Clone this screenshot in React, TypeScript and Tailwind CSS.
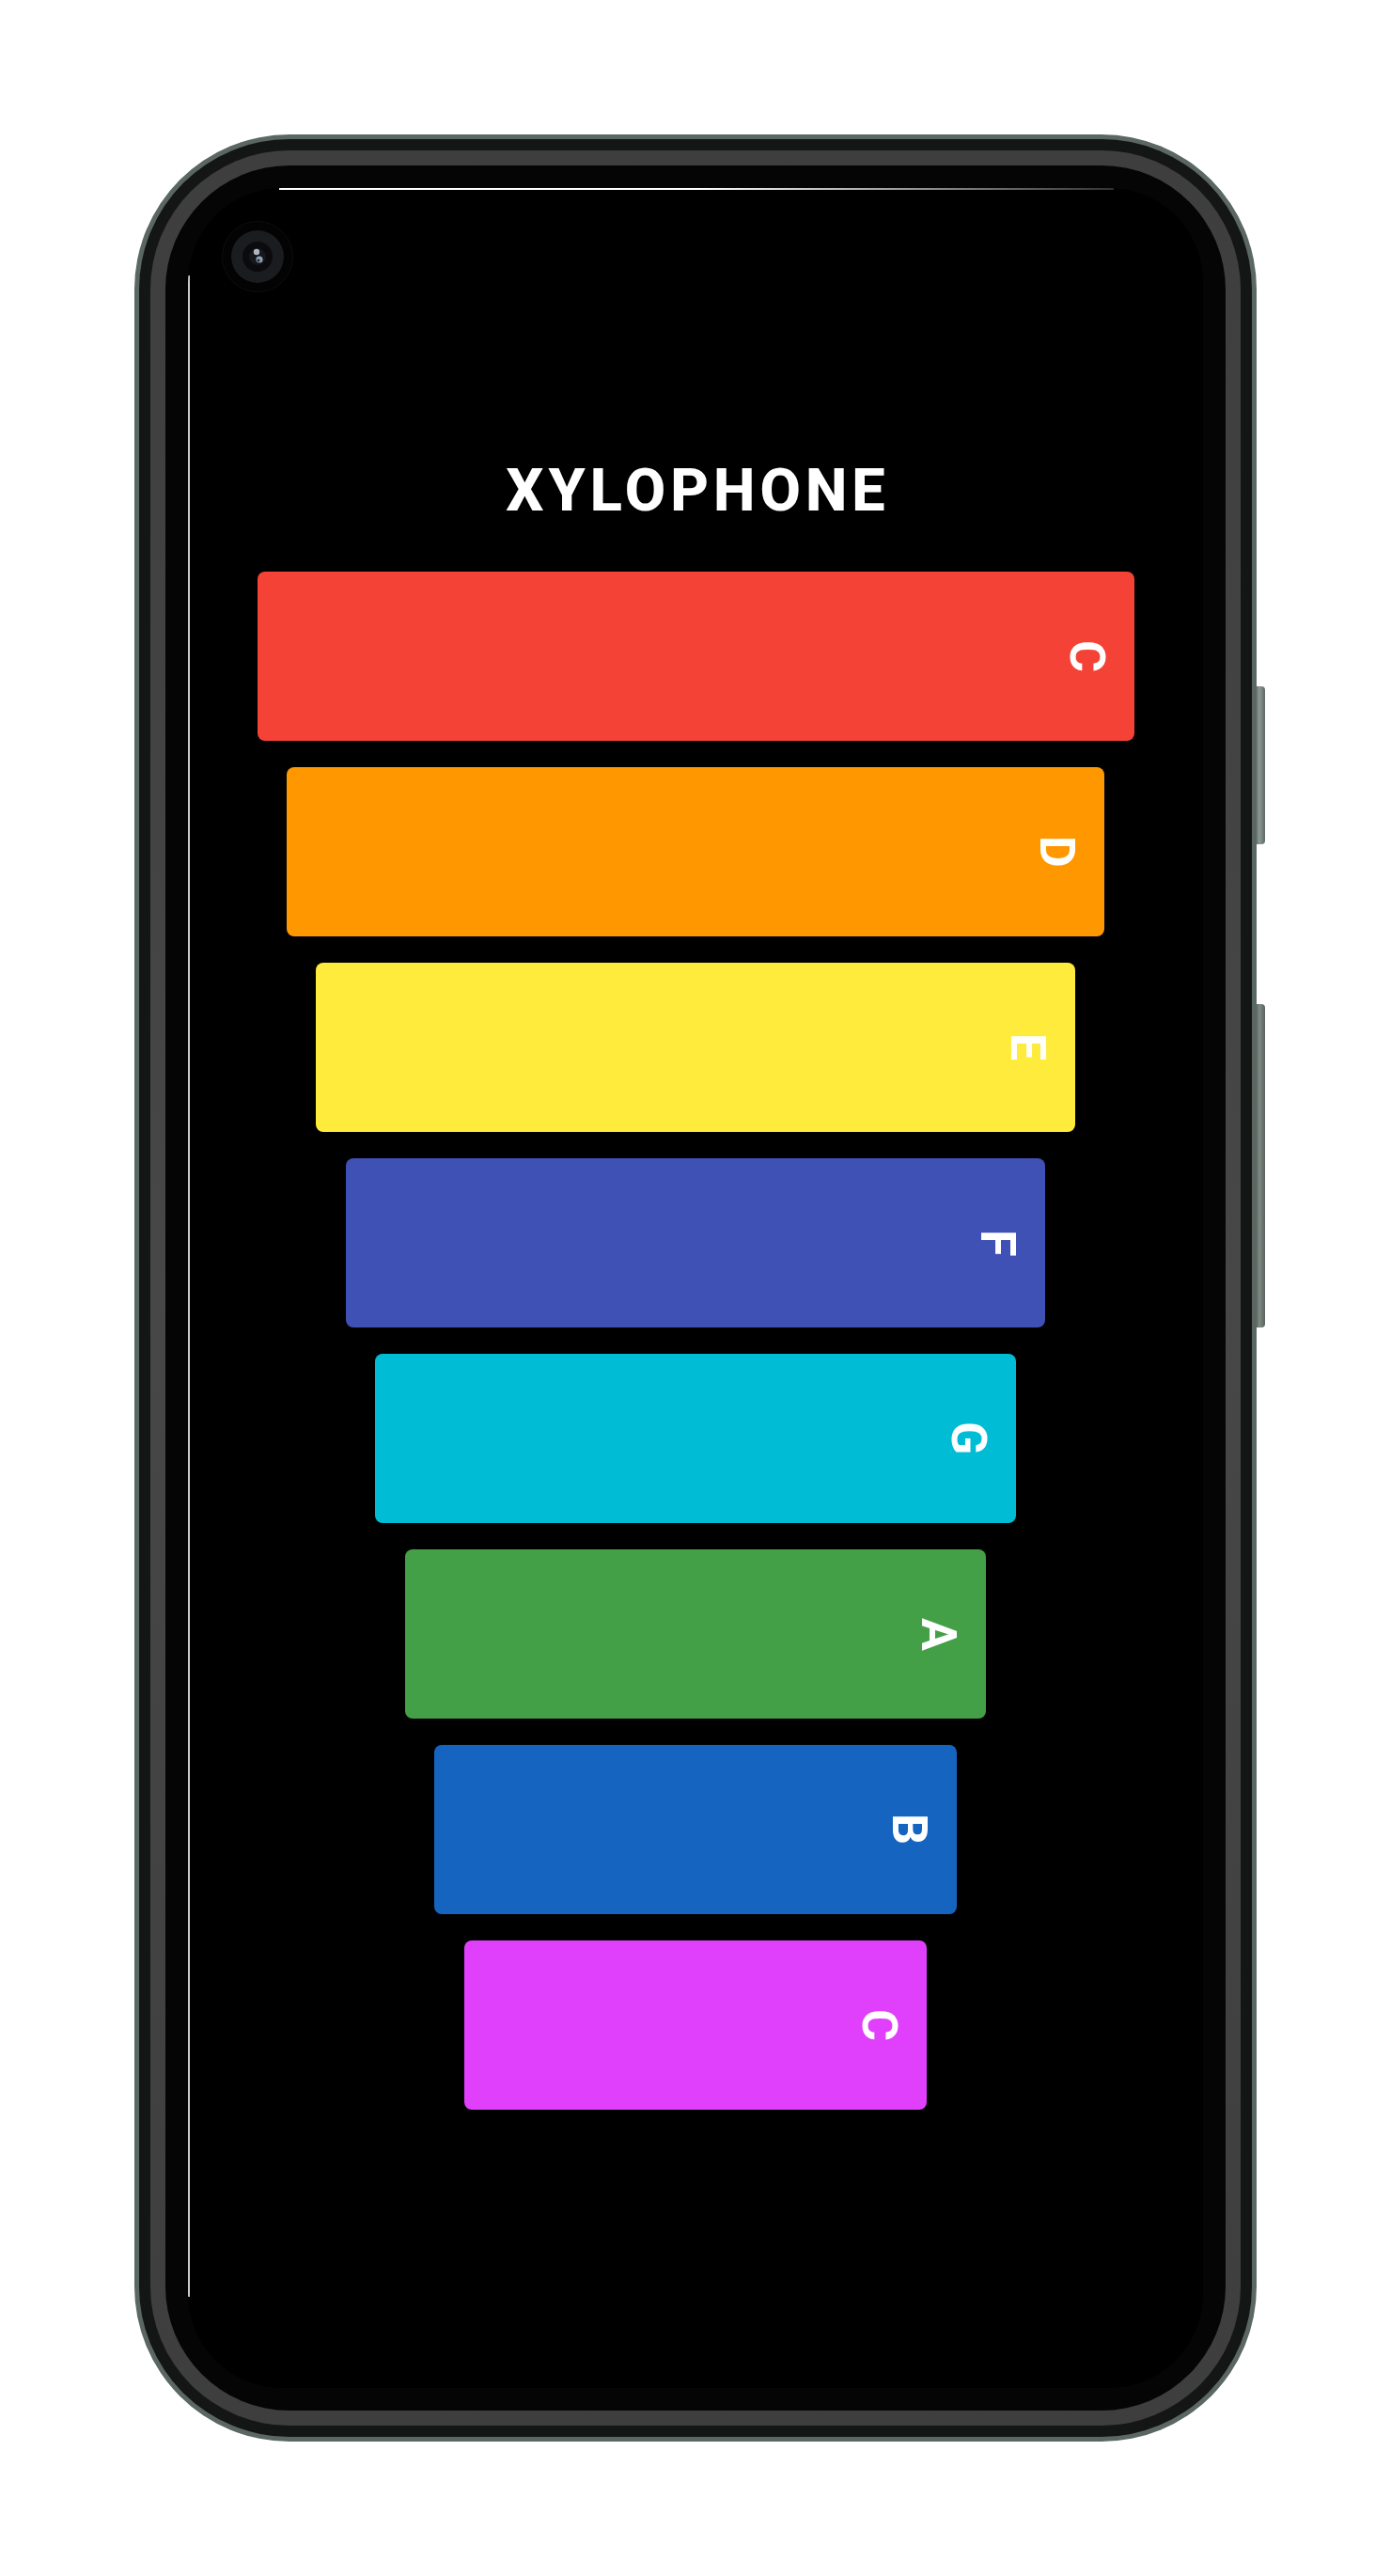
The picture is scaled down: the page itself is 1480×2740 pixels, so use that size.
import React from "react";

const bars = [
  { note: "C", color: "bg-[#f44336]", w: "w-[933px]" },
  { note: "D", color: "bg-[#ff9800]", w: "w-[870px]" },
  { note: "E", color: "bg-[#ffeb3b]", w: "w-[808px]" },
  { note: "F", color: "bg-[#3f51b5]", w: "w-[744px]" },
  { note: "G", color: "bg-[#00bcd4]", w: "w-[682px]" },
  { note: "A", color: "bg-[#43a047]", w: "w-[618px]" },
  { note: "B", color: "bg-[#1565c0]", w: "w-[556px]" },
  { note: "C", color: "bg-[#e040fb]", w: "w-[492px]" },
];

function Camera() {
  return (
    <svg width="76" height="76" viewBox="0 0 76 76" className="absolute left-[36px] top-[35px]">
      <circle cx="38" cy="38" r="37.5" fill="#030303" stroke="#0e0e0e" strokeWidth="1" />
      <circle cx="38" cy="38" r="28" fill="#1b1c20" />
      <circle cx="38" cy="38" r="16" fill="#0b0b0e" />
      <circle cx="38" cy="38" r="9" fill="#15171c" />
      <circle cx="37" cy="33" r="3.2" fill="#aeb6c0" />
      <circle cx="40" cy="41" r="3.6" fill="#8fa3b4" />
      <circle cx="39" cy="42" r="1.6" fill="#1d2a36" />
    </svg>
  );
}

export default function App() {
  return (
    <div className="w-[1480px] h-[2740px] bg-white flex justify-center pt-[143px]" style={{ fontFamily: "Roboto, 'Liberation Sans', sans-serif" }}>
      <div className="relative w-[1194px] h-[2454px]">
        <div className="absolute right-[-9px] top-[587px] w-[12px] h-[168px] rounded-r-[4px] bg-gradient-to-r from-[#4c5753] via-[#8d9a94] to-[#5d6964]" />
        <div className="absolute right-[-9px] top-[925px] w-[12px] h-[344px] rounded-r-[4px] bg-gradient-to-r from-[#3f4945] via-[#7f8c86] to-[#56625d]" />
        <div className="relative h-full rounded-[165px] bg-[#5b6762] p-[5px]">
          <div className="h-full rounded-[160px] bg-[#141615] p-[12px]">
            <div className="h-full rounded-[148px] bg-gradient-to-b from-[#3e3e3e] via-[#474747] to-[#3e3e3e] p-[16px]">
              <div className="h-full rounded-[132px] bg-[#050505] p-[24px]">
                <div className="relative h-full rounded-[100px] bg-black overflow-hidden">
                  <div className="absolute top-0 left-[97px] w-[888px] h-[2px] bg-gradient-to-r from-white via-white to-white/20" />
                  <div className="absolute left-0 top-[93px] w-[2px] h-[2150px] bg-white/80" />
                  <Camera />
                  <div className="flex flex-col items-center pt-[290px]">
                    <h1 className="text-white font-extrabold text-[63px] leading-none tracking-[5px] pl-[5px]">
                      XYLOPHONE
                    </h1>
                    <div className="mt-[55px] flex flex-col items-center gap-[28px]">
                      {bars.map((b, i) => (
                        <div
                          key={i}
                          className={`${b.color} ${b.w} h-[180px] rounded-[8px] flex items-center justify-end pr-[25px]`}
                        >
                          <span className="text-white font-bold text-[52px] leading-none [writing-mode:vertical-rl]">
                            {b.note}
                          </span>
                        </div>
                      ))}
                    </div>
                  </div>
                </div>
              </div>
            </div>
          </div>
        </div>
      </div>
    </div>
  );
}
